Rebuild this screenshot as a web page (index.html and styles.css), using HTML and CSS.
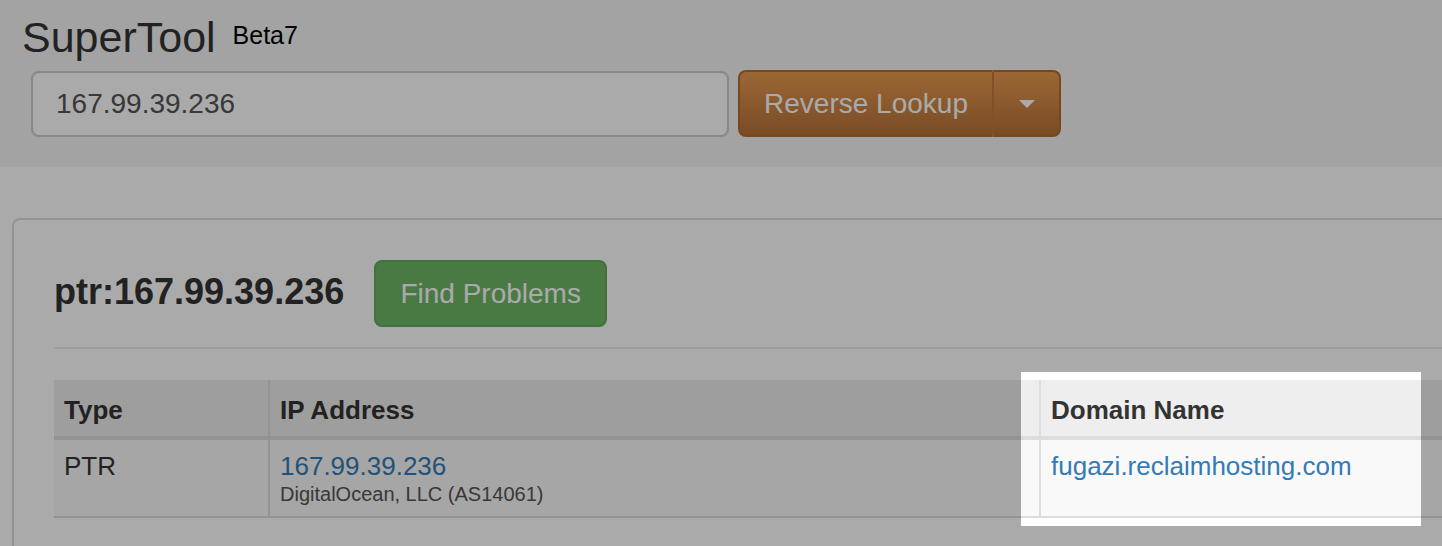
FILE: index.html
```html
<!DOCTYPE html>
<html lang="en">
<head>
    <meta charset="UTF-8">
    <title>SuperTool - Reverse Lookup</title>
    <link rel="stylesheet" href="styles.css">
</head>
<body>

    <div class="topbar">
        <h1>SuperTool <span class="beta">Beta7</span></h1>
        <div class="search-row">
            <input type="text" class="search-input" value="167.99.39.236">
            <div class="btn-group">
                <button class="btn-lookup">Reverse Lookup</button>
                <button class="btn-caret"><span class="caret"></span></button>
            </div>
        </div>
    </div>

    <div class="panel">
        <div class="panel-title">
            <h2>ptr:167.99.39.236</h2>
            <button class="btn-problems">Find Problems</button>
        </div>
        <hr>
        <table class="results">
            <colgroup>
                <col class="col-type">
                <col class="col-ip">
                <col>
            </colgroup>
            <thead>
                <tr>
                    <th>Type</th>
                    <th>IP Address</th>
                    <th>Domain Name</th>
                </tr>
            </thead>
            <tbody>
                <tr>
                    <td>PTR</td>
                    <td>
                        <a href="#">167.99.39.236</a>
                        <div class="asn">DigitalOcean, LLC (AS14061)</div>
                    </td>
                    <td><a href="#">fugazi.reclaimhosting.com</a></td>
                </tr>
            </tbody>
        </table>
    </div>

    <!-- tour overlay: dims the page except the highlighted column -->
    <div class="tour-spotlight"></div>

</body>
</html>
```

FILE: styles.css
```css
html, body {
    overflow: hidden;
}

body {
    font-family: "Liberation Sans", Arial, sans-serif;
    color: #333;
    background: #fff;
    margin: 0;
    position: relative;
    min-height: 546px;
}

.topbar {
    background: #f5f5f5;
    height: 167px;
    box-sizing: border-box;
    padding: 13px 22px 0;
}

h1 {
    margin: 0;
    font-size: 43px;
    font-weight: normal;
    line-height: 48px;
    color: #333;
}

.beta {
    font-size: 25px;
    color: #000;
    margin-left: 5px;
    vertical-align: 8px;
    line-height: 1;
}

.search-row {
    display: flex;
    align-items: center;
    gap: 9px;
    margin-top: 9px;
    padding-left: 9px;
}

.search-input {
    width: 698px;
    height: 66px;
    box-sizing: border-box;
    border: 2px solid #ccc;
    border-radius: 8px;
    padding: 0 23px;
    font-family: "Liberation Sans", Arial, sans-serif;
    font-size: 28px;
    color: #555;
    background: #fff;
    outline: none;
}

.btn-group {
    display: flex;
    height: 67px;
}

.btn-group button {
    height: 67px;
    border: 2px solid #b26c2e;
    background: linear-gradient(#ea9a4f, #b67239);
    color: #fff;
    font-family: "Liberation Sans", Arial, sans-serif;
    font-size: 28px;
    cursor: pointer;
}

.btn-lookup {
    width: 254px;
    border-radius: 8px 0 0 8px;
    border-right: none !important;
    padding: 0;
}

.btn-caret {
    width: 69px;
    border-radius: 0 8px 8px 0;
    border-left: 2px solid #c17a3c !important;
    display: flex;
    align-items: center;
    justify-content: center;
}

.caret {
    width: 0;
    height: 0;
    border-left: 8px solid transparent;
    border-right: 8px solid transparent;
    border-top: 8px solid #fff;
}

.panel {
    margin: 51px 0 0 12px;
    width: 1520px;
    box-sizing: border-box;
    border: 2px solid #ddd;
    border-radius: 8px;
    padding: 40px 40px 80px;
    background: #fff;
}

.panel-title {
    display: flex;
    align-items: center;
    gap: 30px;
}

.panel-title h2 {
    margin: 0 0 5px;
    font-size: 36px;
    font-weight: bold;
    line-height: 43px;
    color: #333;
}

.btn-problems {
    width: 233px;
    height: 67px;
    border: 2px solid #62ab58;
    border-radius: 8px;
    background: #6fb765;
    color: #fff;
    font-family: "Liberation Sans", Arial, sans-serif;
    font-size: 28px;
    cursor: pointer;
}

hr {
    margin: 20px 0 0;
    border: none;
    border-top: 2px solid #eee;
}

.results {
    margin-top: 31px;
    width: 100%;
    border-collapse: collapse;
    table-layout: fixed;
}

.col-type {
    width: 215px;
}

.col-ip {
    width: 771px;
}

.results th {
    background: #eee;
    text-align: left;
    font-size: 26px;
    font-weight: bold;
    line-height: 32px;
    padding: 14px 10px 10px;
    border-bottom: 4px solid #ddd;
}

.results td {
    background: #f9f9f9;
    vertical-align: top;
    font-size: 26px;
    line-height: 31px;
    padding: 11px 10px 10px;
    border-bottom: 2px solid #ddd;
}

.results th + th,
.results td + td {
    border-left: 2px solid #ddd;
}

.results a {
    color: #337ab7;
    text-decoration: none;
}

.asn {
    font-size: 20px;
    line-height: 24px;
    color: #555;
}

.tour-spotlight {
    position: absolute;
    left: 1021px;
    top: 372px;
    width: 400px;
    height: 154px;
    box-shadow: 0 0 0 3000px rgba(0, 0, 0, 0.333);
    pointer-events: none;
}
```
